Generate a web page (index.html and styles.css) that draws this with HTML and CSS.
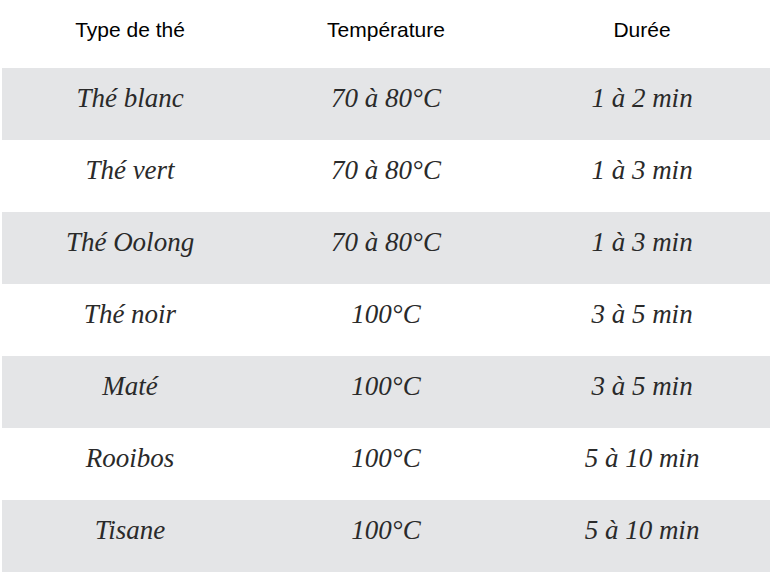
FILE: index.html
```html
<!DOCTYPE html>
<html lang="fr">
<head>
<meta charset="utf-8">
<title>Types de thé</title>
<link rel="stylesheet" href="styles.css">
</head>
<body>
<table class="tea-table">
  <thead>
    <tr>
      <th>Type de thé</th>
      <th>Température</th>
      <th>Durée</th>
    </tr>
  </thead>
  <tbody>
    <tr><td>Thé blanc</td><td>70 à 80°C</td><td>1 à 2 min</td></tr>
    <tr><td>Thé vert</td><td>70 à 80°C</td><td>1 à 3 min</td></tr>
    <tr><td>Thé Oolong</td><td>70 à 80°C</td><td>1 à 3 min</td></tr>
    <tr><td>Thé noir</td><td>100°C</td><td>3 à 5 min</td></tr>
    <tr><td>Maté</td><td>100°C</td><td>3 à 5 min</td></tr>
    <tr><td>Rooibos</td><td>100°C</td><td>5 à 10 min</td></tr>
    <tr><td>Tisane</td><td>100°C</td><td>5 à 10 min</td></tr>
  </tbody>
</table>
</body>
</html>
```
FILE: styles.css
```css
html, body {
  margin: 0;
  padding: 0;
  background: #ffffff;
}

.tea-table {
  border-collapse: collapse;
  border-spacing: 0;
  table-layout: fixed;
  width: 768px;
  margin: 0 0 0 2px;
}

.tea-table th {
  width: 256px;
  padding: 18px 0 26px;
  height: 24px;
  line-height: 24px;
  font-family: "Liberation Sans", Arial, sans-serif;
  font-size: 21px;
  font-weight: normal;
  color: #000000;
  text-align: center;
  vertical-align: top;
}

.tea-table td {
  padding: 14px 0 26px;
  height: 32px;
  line-height: 32px;
  font-family: "Liberation Serif", "DejaVu Serif", serif;
  font-style: italic;
  font-size: 27px;
  color: #2a2a2a;
  text-align: center;
  vertical-align: top;
}

.tea-table tbody tr:nth-child(odd) td {
  background: #e4e5e7;
}
```
